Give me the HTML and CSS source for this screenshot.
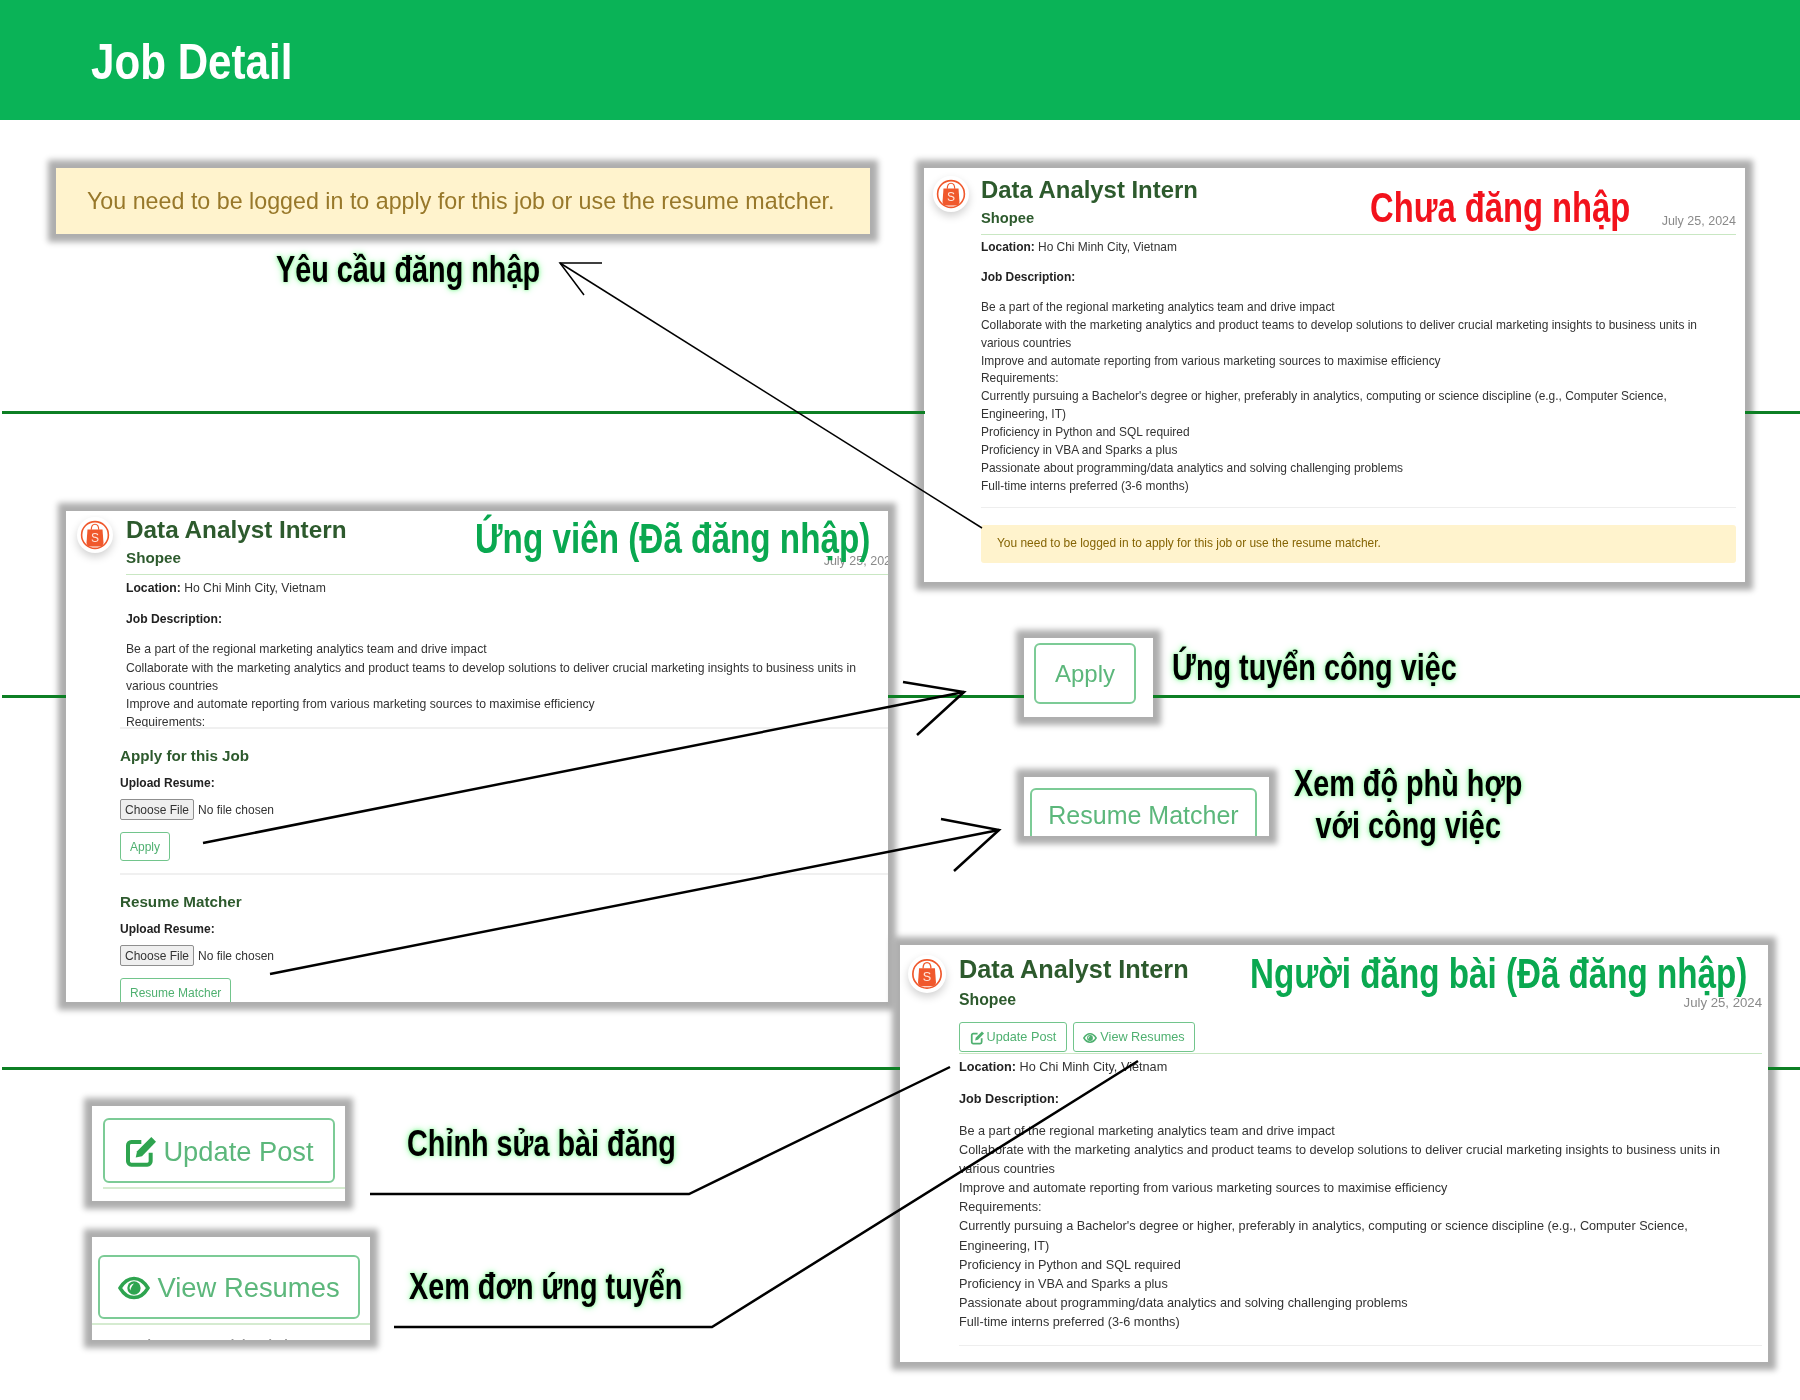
FILE: index.html
```html
<!DOCTYPE html>
<html lang="en">
<head>
    <meta charset="UTF-8">
    <meta name="viewport" content="width=device-width, initial-scale=1.0">
    <title>Job Detail</title>
    <link rel="stylesheet" href="styles.css">
</head>
<body>
    <svg class="defs" width="0" height="0" aria-hidden="true">
        <symbol id="shopee" viewBox="0 0 36 36">
            <circle cx="18" cy="18" r="13.400" fill="none" stroke="#f0582c" stroke-width="1.6"/>
            <path d="M14.300 12.800c0-7.400 7.400-7.400 7.400 0" fill="none" stroke="#f0582c" stroke-width="1.2"/>
            <path d="M10.500 12.500h15l1 13.500c-.3 2.400-1.600 3.500-4 3.500h-9c-2.400 0-3.700-1.100-4-3.500z" fill="#f0582c"/>
            <text x="18" y="25" text-anchor="middle" font-family="Liberation Sans, sans-serif" font-size="12" fill="#ffe6dc">S</text>
        </symbol>
        <symbol id="icon-edit" viewBox="0 0 24 24">
            <path d="M13 4.500H5.500A2.500 2.500 0 0 0 3 7v12a2.500 2.500 0 0 0 2.500 2.500h12A2.500 2.500 0 0 0 20 19v-6.500" fill="none" stroke="currentColor" stroke-width="3"/>
            <path d="M20.500 .8L24 4.300 13.500 15.200l-4.700 1 1-4.700z" fill="currentColor"/>
        </symbol>
        <symbol id="icon-eye" viewBox="0 0 24 24">
            <path d="M1.500 12C4.500 7 8 4.800 12 4.800S19.500 7 22.500 12c-3 5-6.500 7.200-10.500 7.200S4.500 17 1.500 12z" fill="none" stroke="currentColor" stroke-width="2.600"/>
            <circle cx="12" cy="12" r="5" fill="currentColor"/>
            <path d="M12 8.600a3.400 3.400 0 0 0-2.800 5.200c.4-2 1.400-3.600 2.800-5.200z" fill="#fff"/>
        </symbol>
    </svg>

    <header class="page-header">
        <h1>Job Detail</h1>
    </header>

    <main class="board">
        <!-- Login notice -->
        <div class="shot crop crop-notice"><span class="crop-text">You need to be logged in to apply for this job or use the resume matcher.</span></div>
        <p class="note note-login">Yêu cầu đăng nhập</p>

        <!-- Guest -->
        <section class="shot job-card card-guest">
            <svg class="logo"><use href="#shopee"/></svg>
            <div class="job-main">
                <div class="job-head">
                    <h2 class="job-title">Data Analyst Intern</h2>
                    <div class="company-row">
                        <span class="company">Shopee</span>
                        <span class="job-date">July 25, 2024</span>
                    </div>
                </div>
                <p class="location"><strong>Location:</strong> Ho Chi Minh City, Vietnam</p>
                <p class="desc-title"><strong>Job Description:</strong></p>
                <p class="desc">Be a part of the regional marketing analytics team and drive impact<br>
                    Collaborate with the marketing analytics and product teams to develop solutions to deliver crucial marketing insights to business units in<br>
                    various countries<br>
                    Improve and automate reporting from various marketing sources to maximise efficiency<br>
                    Requirements:<br>
                    Currently pursuing a Bachelor's degree or higher, preferably in analytics, computing or science discipline (e.g., Computer Science,<br>
                    Engineering, IT)<br>
                    Proficiency in Python and SQL required<br>
                    Proficiency in VBA and Sparks a plus<br>
                    Passionate about programming/data analytics and solving challenging problems<br>
                    Full-time interns preferred (3-6 months)</p>
                <hr class="rule">
                <div class="alert">You need to be logged in to apply for this job or use the resume matcher.</div>
            </div>
        </section>
        <p class="tag tag-red tag-guest">Chưa đăng nhập</p>

        <!-- Candidate -->
        <section class="shot job-card card-candidate">
            <div class="job-top">
                <svg class="logo"><use href="#shopee"/></svg>
                <div class="job-main">
                    <div class="job-head">
                        <h2 class="job-title">Data Analyst Intern</h2>
                        <div class="company-row">
                            <span class="company">Shopee</span>
                            <span class="job-date">July 25, 2024</span>
                        </div>
                    </div>
                    <p class="location"><strong>Location:</strong> Ho Chi Minh City, Vietnam</p>
                    <p class="desc-title"><strong>Job Description:</strong></p>
                    <p class="desc">Be a part of the regional marketing analytics team and drive impact<br>
                        Collaborate with the marketing analytics and product teams to develop solutions to deliver crucial marketing insights to business units in<br>
                        various countries<br>
                        Improve and automate reporting from various marketing sources to maximise efficiency<br>
                        Requirements:</p>
                </div>
            </div>
            <div class="job-forms">
                <form class="upload-form">
                    <h3>Apply for this Job</h3>
                    <label for="resume1">Upload Resume:</label>
                    <input type="file" id="resume1">
                    <button type="button" class="btn-outline">Apply</button>
                </form>
                <form class="upload-form">
                    <h3>Resume Matcher</h3>
                    <label for="resume2">Upload Resume:</label>
                    <input type="file" id="resume2">
                    <button type="button" class="btn-outline">Resume Matcher</button>
                </form>
            </div>
        </section>
        <p class="tag tag-green tag-candidate">Ứng viên (Đã đăng nhập)</p>

        <!-- Candidate actions -->
        <div class="shot crop crop-apply"><span class="crop-btn">Apply</span></div>
        <p class="note note-apply">Ứng tuyển công việc</p>

        <div class="shot crop crop-matcher"><span class="crop-btn">Resume Matcher</span></div>
        <p class="note note-matcher">Xem độ phù hợp<br>với công việc</p>

        <!-- Poster -->
        <section class="shot job-card card-poster">
            <svg class="logo"><use href="#shopee"/></svg>
            <div class="job-main">
                <div class="job-head">
                    <h2 class="job-title">Data Analyst Intern</h2>
                    <div class="company-row">
                        <span class="company">Shopee</span>
                        <span class="job-date">July 25, 2024</span>
                    </div>
                    <div class="post-actions">
                        <a class="btn-outline"><svg class="btn-icon"><use href="#icon-edit"/></svg>Update Post</a>
                        <a class="btn-outline"><svg class="btn-icon"><use href="#icon-eye"/></svg>View Resumes</a>
                    </div>
                </div>
                <p class="location"><strong>Location:</strong> Ho Chi Minh City, Vietnam</p>
                <p class="desc-title"><strong>Job Description:</strong></p>
                <p class="desc">Be a part of the regional marketing analytics team and drive impact<br>
                    Collaborate with the marketing analytics and product teams to develop solutions to deliver crucial marketing insights to business units in<br>
                    various countries<br>
                    Improve and automate reporting from various marketing sources to maximise efficiency<br>
                    Requirements:<br>
                    Currently pursuing a Bachelor's degree or higher, preferably in analytics, computing or science discipline (e.g., Computer Science,<br>
                    Engineering, IT)<br>
                    Proficiency in Python and SQL required<br>
                    Proficiency in VBA and Sparks a plus<br>
                    Passionate about programming/data analytics and solving challenging problems<br>
                    Full-time interns preferred (3-6 months)</p>
                <hr class="rule">
            </div>
        </section>
        <p class="tag tag-green tag-poster">Người đăng bài (Đã đăng nhập)</p>

        <!-- Poster actions -->
        <div class="shot crop crop-update">
            <span class="crop-btn"><svg class="crop-icon"><use href="#icon-edit"/></svg>Update Post</span>
            <hr class="crop-rule">
        </div>
        <p class="note note-update">Chỉnh sửa bài đăng</p>

        <div class="shot crop crop-view">
            <span class="crop-btn"><svg class="crop-icon"><use href="#icon-eye"/></svg>View Resumes</span>
            <hr class="crop-rule">
            <p class="crop-cut">Location: Ho Chi Minh</p>
        </div>
        <p class="note note-view">Xem đơn ứng tuyển</p>

        <!-- Separators and arrows -->
        <svg class="overlay" viewBox="0 0 1800 1400">
            <g class="separators">
                <path d="M2 412.500H925M1745 412.500H1800"/>
                <path d="M2 696.500H66M888 696.500H1024M1153 696.500H1800"/>
                <path d="M2 1068.500H900M1768 1068.500H1800"/>
            </g>
            <g class="arrows thin">
                <path d="M602 263H560L584 295"/>
                <path d="M560 263L982 528"/>
            </g>
            <g class="arrows">
                <path d="M203 843L964 692"/>
                <path d="M903 682L964 692L917 735"/>
                <path d="M270 974L999 830"/>
                <path d="M941 819L999 830L954 871"/>
                <path d="M370 1194H689L950 1067"/>
                <path d="M394 1327H712L1138 1061"/>
            </g>
        </svg>
    </main>
</body>
</html>
```

FILE: styles.css
```css
* {
    box-sizing: border-box;
}

body {
    margin: 0;
    background: #fff;
    font-family: "Liberation Sans", Arial, sans-serif;
    color: #333;
}

p, h1, h2, h3 {
    margin: 0;
}

.defs {
    position: absolute;
}

.page-header {
    height: 120px;
    padding: 4px 0 0 91px;
    background: #0ab357;
    color: #fff;
    display: flex;
    align-items: center;
}

/* no condensed face installed, so the big labels are squeezed */
.page-header h1 {
    font-size: 50px;
    font-weight: 700;
    line-height: 1;
    transform: scaleX(.843);
    transform-origin: left center;
}

/* the page is a free canvas of screenshots with notes on top */
.board {
    position: relative;
    height: 1280px;
    overflow: hidden;
}

.shot {
    position: absolute;
    background: #fff;
    overflow: hidden;
    box-shadow: 0 0 6px 8px #aeaeae;
}

.overlay {
    position: absolute;
    left: 0;
    top: -120px;
    width: 1800px;
    height: 1400px;
    pointer-events: none;
}

.separators path {
    fill: none;
    stroke: #0d7f24;
    stroke-width: 3;
}

.arrows path {
    fill: none;
    stroke: #000;
    stroke-width: 2.5;
}

.arrows.thin path {
    stroke-width: 1.5;
}

/* black notes with green glow */
.note {
    position: absolute;
    font-weight: 700;
    font-size: 36px;
    line-height: 42px;
    color: #000;
    white-space: nowrap;
    text-shadow: 0 0 3px #9dfbac, 0 0 6px #9dfbac, 0 0 10px #b8fac2;
    transform: scaleX(.8);
    transform-origin: left center;
}

.note-login { left: 276px; top: 129px; }
.note-apply { left: 1172px; top: 527px; }
.note-matcher { left: 1294px; top: 643px; text-align: center; }
.note-update { left: 407px; top: 1003px; }
.note-view { left: 409px; top: 1146px; }

/* coloured titles over the screenshots */
.tag {
    position: absolute;
    font-weight: 700;
    font-size: 42px;
    white-space: nowrap;
    line-height: 50px;
    transform-origin: left center;
}

.tag-red { color: #f2121c; }
.tag-green { color: #0aa850; }

.tag-guest { left: 1370px; top: 63px; transform: scaleX(.78); }
.tag-candidate { left: 475px; top: 394px; transform: scaleX(.792); }
.tag-poster { left: 1250px; top: 829px; transform: scaleX(.79); }

/* job cards */
.job-card {
    display: flex;
    align-items: flex-start;
    font-size: var(--fs);
    line-height: var(--lh);
}

.job-card > *, .job-top > *, .job-forms {
    filter: blur(.3px);
}

.card-guest {
    --fs: 11.940px;
    --lh: 17.9px;
    left: 924px;
    top: 48px;
    width: 821px;
    height: 414px;
    padding: 7px 9px 0 9px;
}

.card-candidate {
    --fs: 12.180px;
    --lh: 18.2px;
    left: 66px;
    top: 391px;
    width: 822px;
    height: 491px;
    padding: 4px 0 0 0;
    display: block;
}

.card-poster {
    --fs: 12.700px;
    --lh: 19.07px;
    left: 900px;
    top: 825px;
    width: 868px;
    height: 417px;
    padding: 9px 6px 0 8px;
}

.logo {
    flex: none;
    width: 36px;
    height: 36px;
    margin-right: 12px;
    margin-top: 1px;
    border-radius: 50%;
    background: #fff;
    box-shadow: 0 4px 9px rgba(0, 0, 0, .18);
}

.card-poster .logo {
    width: 38px;
    height: 38px;
    margin-right: 13px;
    margin-top: 1px;
}

.job-main {
    flex: 1;
    min-width: 0;
    white-space: nowrap;
}

.job-title {
    font-size: 23.900px;
    font-weight: 700;
    line-height: 30px;
    color: #2d5a2d;
}

.company-row {
    display: flex;
    justify-content: space-between;
    align-items: flex-start;
    margin-top: 3px;
}

.company {
    font-size: 14.700px;
    font-weight: 700;
    line-height: 20px;
    color: #2d5a2d;
}

.job-date {
    padding-top: 6px;
    font-size: 12.5px;
    line-height: 14px;
    color: #8a8a8a;
}

.job-head {
    padding-bottom: 6px;
    border-bottom: 1px solid #c9e7c3;
}

.location {
    margin-top: 4px;
}

.location strong, .desc-title strong {
    color: #222;
}

.desc-title {
    margin-top: 12px;
}

.desc {
    margin-top: 12px;
}

.rule {
    margin: 11px 0 0;
    border: 0;
    border-top: 1px solid #eee;
}

.alert {
    margin-top: 17px;
    height: 38px;
    padding-left: 16px;
    display: flex;
    align-items: center;
    background: #fff3cd;
    border-radius: 3px;
    color: #856404;
}

/* candidate card */
.job-top {
    display: flex;
    align-items: flex-start;
    height: 212px;
    padding-left: 11px;
    overflow: hidden;
}

.card-candidate .logo {
    margin-top: 2px;
    margin-right: 13px;
}

.card-candidate .job-main {
    flex: none;
    width: 772px;
}

.card-candidate .job-title {
    font-size: 24.300px;
}

.card-candidate .company {
    font-size: 15.200px;
}

.card-candidate .desc-title {
    margin-top: 13px;
}

.job-forms {
    padding-left: 54px;
}

.upload-form {
    padding-top: 17px;
    border-top: 2px solid #f0f0f0;
    height: 146px;
}

.upload-form h3 {
    font-size: 15.200px;
    font-weight: 700;
    line-height: 20px;
    color: #2d5a2d;
}

.upload-form label {
    display: block;
    margin-top: 9px;
    font-size: 12px;
    font-weight: 700;
    line-height: 16px;
    color: #222;
}

.upload-form input[type="file"] {
    display: block;
    margin-top: 8px;
    width: 260px;
    height: 21px;
    font-family: "Liberation Sans", sans-serif;
    font-size: 12px;
    color: #333;
}

.upload-form input::file-selector-button {
    width: 74px;
    height: 21px;
    margin-right: 4px;
    padding: 0;
    background: #efefef;
    border: 1px solid #8f8f8f;
    border-radius: 2px;
    font-family: "Liberation Sans", sans-serif;
    font-size: 12px;
    color: #333;
}

.btn-outline {
    display: inline-flex;
    align-items: center;
    height: 29px;
    padding: 0 9px;
    background: #fff;
    border: 1px solid #72c58c;
    border-radius: 3px;
    font-family: "Liberation Sans", sans-serif;
    font-size: 12px;
    color: #4fb070;
}

.upload-form .btn-outline {
    display: flex;
    margin-top: 12px;
}

/* poster card */
.post-actions {
    display: flex;
    gap: 6px;
    margin-top: 12px;
}

.post-actions .btn-outline {
    height: 30px;
    padding: 2px 9.5px 0;
    font-size: 12.700px;
}

.btn-icon {
    width: 14px;
    height: 14px;
    margin-right: 3px;
}

.card-poster .job-head {
    padding-bottom: 1px;
}

.card-poster .job-title {
    font-size: 25.300px;
}

.card-poster .company {
    font-size: 15.800px;
}

.card-poster .company-row {
    margin-top: 6px;
}

.card-poster .job-date {
    font-size: 13.200px;
}

.card-poster .location {
    margin-top: 4px;
}

.card-poster .desc-title, .card-poster .desc, .card-poster .rule {
    margin-top: 13px;
}

/* enlarged crops of the buttons */
.crop-text, .crop-btn, .crop-rule, .crop-cut {
    filter: blur(.5px);
}

.crop-notice {
    left: 56px;
    top: 48px;
    width: 814px;
    height: 66px;
    padding-left: 31px;
    display: flex;
    align-items: center;
    background: #fff3cd;
    font-size: 23.250px;
    color: #98782a;
    white-space: nowrap;
}

.crop-btn {
    display: flex;
    align-items: center;
    justify-content: center;
    border: 2px solid #7ccb96;
    border-radius: 6px;
    color: #5cb77b;
    white-space: nowrap;
}

.crop-apply {
    left: 1024px;
    top: 518px;
    width: 129px;
    height: 79px;
    padding: 5px 0 0 10px;
}

.crop-apply .crop-btn {
    width: 102px;
    height: 61px;
    font-size: 24px;
}

.crop-matcher {
    left: 1024px;
    top: 657px;
    width: 245px;
    height: 59px;
    padding: 11px 0 0 6px;
}

.crop-matcher .crop-btn {
    width: 227px;
    height: 60px;
    padding-bottom: 6px;
    font-size: 25px;
}

.crop-update {
    left: 92px;
    top: 986px;
    width: 253px;
    height: 95px;
    padding: 12px 0 0 11px;
}

.crop-update .crop-btn {
    width: 232px;
    height: 65px;
    padding-top: 2px;
    font-size: 27.300px;
}

.crop-view {
    left: 92px;
    top: 1117px;
    width: 278px;
    height: 103px;
    padding: 18px 0 0 6px;
}

.crop-view .crop-btn {
    width: 262px;
    height: 64px;
    padding-top: 2px;
    font-size: 27.400px;
}

.crop-icon {
    width: 32px;
    height: 32px;
    margin-right: 7px;
    color: #2ea44f;
}

.crop-rule {
    margin: 4px 0 0;
    border: 0;
    border-top: 2px solid #d5ebd0;
}

.crop-view .crop-rule {
    margin-left: -6px;
}

.crop-cut {
    margin-top: 7px;
    font-size: 20px;
    line-height: 30px;
    color: #999;
}
```
